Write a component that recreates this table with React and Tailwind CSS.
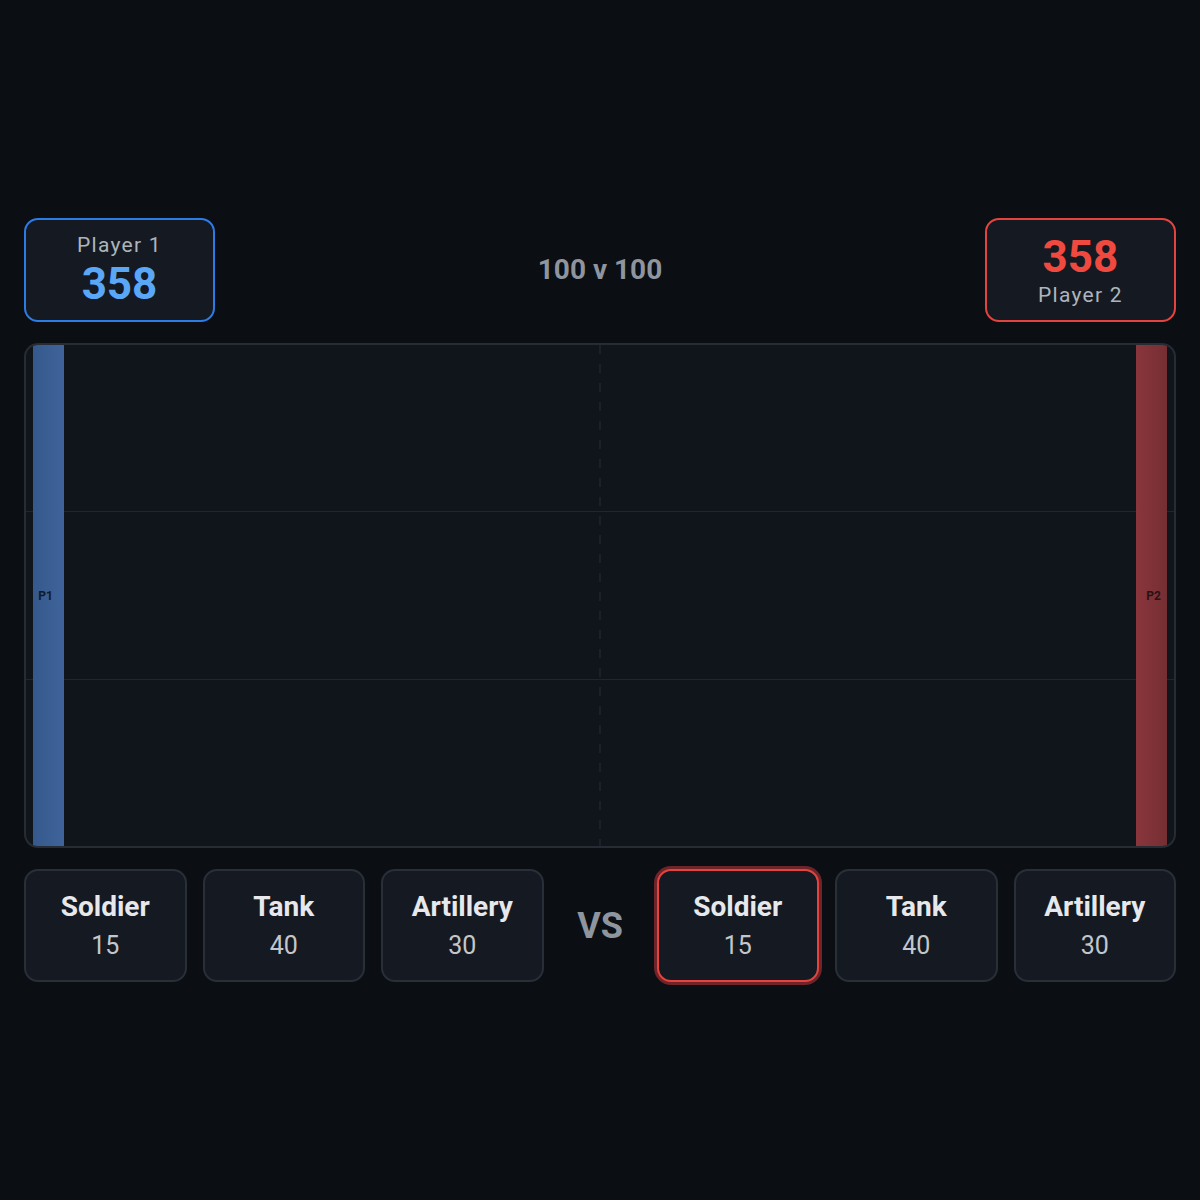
import React from 'react'

const units = [
  { name: 'Soldier', cost: 15 },
  { name: 'Tank', cost: 40 },
  { name: 'Artillery', cost: 30 },
]

function UnitCard({ name, cost, selected }) {
  return (
    <div
      className={`flex flex-col items-center justify-center rounded-[14px] border-2 bg-[#151a22] ${
        selected
          ? 'border-[#e4443f] ring-[3px] ring-[#6e2428]'
          : 'border-[#292f38]'
      }`}
    >
      <div className="text-[28px] leading-[32px] font-bold text-[#e6e8eb]">{name}</div>
      <div className="mt-2 text-[25px] leading-[30px] text-[#c3c7cd]">{cost}</div>
    </div>
  )
}

function Lane({ last }) {
  return <div className={`flex-1 ${last ? '' : 'border-b border-[#20262e]'}`} />
}

export default function App() {
  return (
    <div
      className="min-h-screen bg-[#0b0e13] flex flex-col justify-center px-6"
      style={{ fontFamily: 'Roboto, "Noto Sans", sans-serif' }}
    >
      {/* HEADER */}
      <div className="flex items-center justify-between h-[104px]">
        <div className="w-[191px] h-full rounded-[14px] border-2 border-[#2d7ce6] bg-[#151a22] flex flex-col items-center justify-center pb-[2px]">
          <div className="text-[21px] leading-[26px] tracking-[0.06em] text-[#aeb4bc]">Player 1</div>
          <div className="mt-1 text-[44px] leading-[44px] font-bold text-[#5aa7f8]">358</div>
        </div>

        <div className="text-[28px] font-bold text-[#8e959e]">100 v 100</div>

        <div className="w-[191px] h-full rounded-[14px] border-2 border-[#e4443f] bg-[#151a22] flex flex-col items-center justify-center pt-[3px]">
          <div className="text-[44px] leading-[44px] font-bold text-[#f0493f]">358</div>
          <div className="mt-[3px] text-[21px] leading-[26px] tracking-[0.06em] text-[#aeb4bc]">Player 2</div>
        </div>
      </div>

      {/* BOARD */}
      <div className="relative mt-[21px] h-[505px] rounded-[14px] border-2 border-[#272c34] bg-[#10151c] overflow-hidden flex flex-col">
        <Lane />
        <Lane />
        <Lane last />

        <div className="absolute left-1/2 top-0 bottom-0 w-px -translate-x-1/2 bg-[repeating-linear-gradient(to_bottom,#262c35_0px,#262c35_9px,transparent_9px,transparent_19px)]" />

        <div className="absolute left-[7px] top-0 bottom-0 w-[31px] bg-gradient-to-r from-[#35598c] to-[#3f649b] flex items-center justify-center">
          <span className="text-[12px] font-bold text-[#101a2c] -translate-x-[3px]">P1</span>
        </div>

        <div className="absolute right-[7px] top-0 bottom-0 w-[31px] bg-gradient-to-r from-[#8a353c] to-[#742f33] flex items-center justify-center">
          <span className="text-[12px] font-bold text-[#2a1215] translate-x-[2px]">P2</span>
        </div>
      </div>

      {/* UNITS */}
      <div className="mt-[21px] flex h-[113px]">
        <div className="flex-1 grid grid-cols-3 gap-4">
          {units.map((u) => (
            <UnitCard key={u.name} {...u} />
          ))}
        </div>
        <div className="w-[113px] flex items-center justify-center text-[36px] font-bold text-[#8e959e]">VS</div>
        <div className="flex-1 grid grid-cols-3 gap-4">
          {units.map((u, i) => (
            <UnitCard key={u.name} {...u} selected={i === 0} />
          ))}
        </div>
      </div>
    </div>
  )
}
